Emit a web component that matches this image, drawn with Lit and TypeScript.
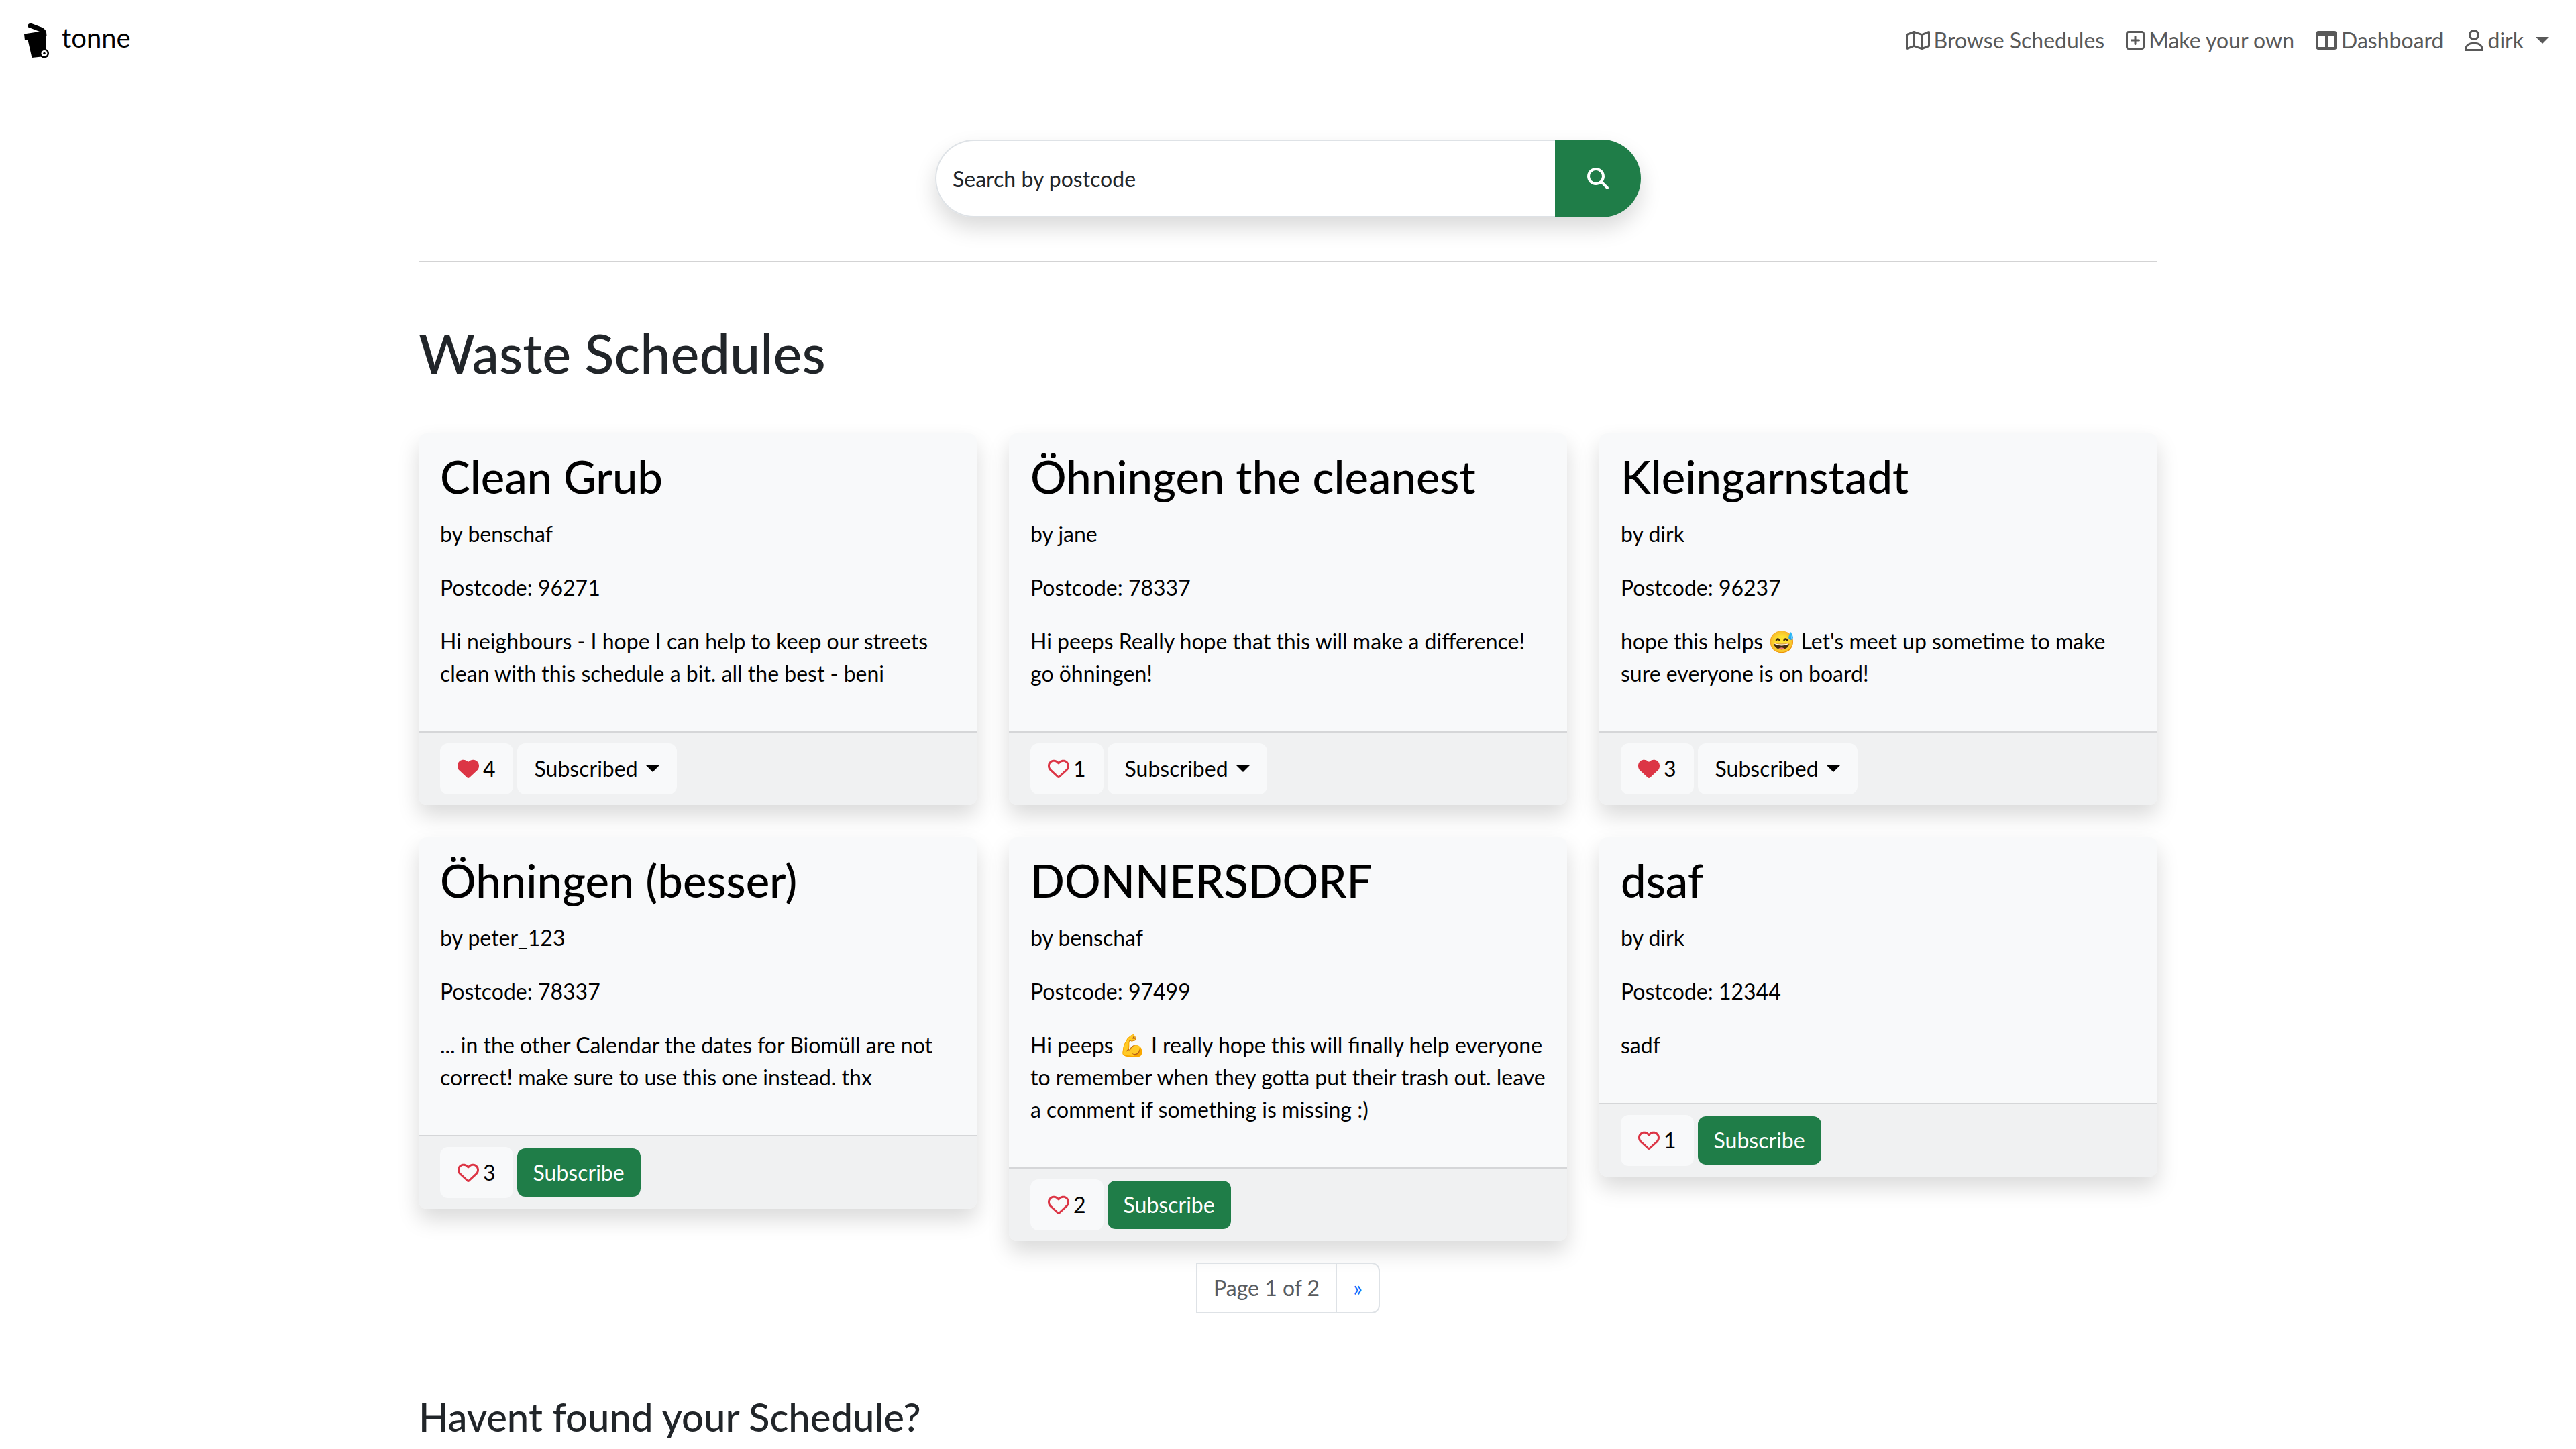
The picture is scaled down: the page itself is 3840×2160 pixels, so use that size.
import { LitElement, html, css, svg, nothing } from "lit";
import { customElement, property } from "lit/decorators.js";

interface Schedule {
  title: string;
  author: string;
  postcode: string;
  text: string;
  likes: number;
  liked: boolean;
  subscribed: boolean;
}

const SCHEDULES: Schedule[] = [
  { title: "Clean Grub", author: "benschaf", postcode: "96271", text: "Hi neighbours - I hope I can help to keep our streets clean with this schedule a bit. all the best - beni", likes: 4, liked: true, subscribed: true },
  { title: "Öhningen the cleanest", author: "jane", postcode: "78337", text: "Hi peeps Really hope that this will make a difference! go öhningen!", likes: 1, liked: false, subscribed: true },
  { title: "Kleingarnstadt", author: "dirk", postcode: "96237", text: "hope this helps 😅 Let's meet up sometime to make sure everyone is on board!", likes: 3, liked: true, subscribed: true },
  { title: "Öhningen (besser)", author: "peter_123", postcode: "78337", text: "... in the other Calendar the dates for Biomüll are not correct! make sure to use this one instead. thx", likes: 3, liked: false, subscribed: false },
  { title: "DONNERSDORF", author: "benschaf", postcode: "97499", text: "Hi peeps 💪 I really hope this will finally help everyone to remember when they gotta put their trash out. leave a comment if something is missing :)", likes: 2, liked: false, subscribed: false },
  { title: "dsaf", author: "dirk", postcode: "12344", text: "sadf", likes: 1, liked: false, subscribed: false },
];

const ICONS: Record<string, { w: number; d: string }> = {
  map: { w: 576, d: "M565.6 36.2C572.1 40.7 576 48.1 576 56V392c0 10-6.2 18.9-15.5 22.4l-168 64c-5.2 2-10.9 2.1-16.1 .3L192.5 417.5l-160 61c-7.4 2.8-15.700 1.800-22.200-2.700S0 463.900 0 456V120c0-10 6.100-18.900 15.500-22.400l168-64c5.200-2 10.900-2.100 16.100-.3L383.500 94.500l160-61c7.400-2.800 15.700-1.800 22.200 2.700zM48 136.500V421.200l120-45.700V90.800L48 136.500zM360 422.700V137.300l-144-48V374.700l144 48zm48-1.500l120-45.700V90.800L408 136.500V421.200z" },
  plus: { w: 448, d: "M64 80c-8.800 0-16 7.200-16 16V416c0 8.800 7.200 16 16 16H384c8.800 0 16-7.200 16-16V96c0-8.800-7.200-16-16-16H64zM0 96C0 60.700 28.700 32 64 32H384c35.300 0 64 28.700 64 64V416c0 35.300-28.700 64-64 64H64c-35.300 0-64-28.700-64-64V96zM200 344V280H136c-13.300 0-24-10.700-24-24s10.700-24 24-24h64V168c0-13.300 10.700-24 24-24s24 10.700 24 24v64h64c13.300 0 24 10.700 24 24s-10.700 24-24 24H248v64c0 13.300-10.700 24-24 24s-24-10.700-24-24z" },
  columns: { w: 512, d: "M0 96C0 60.700 28.700 32 64 32H448c35.300 0 64 28.700 64 64V416c0 35.300-28.700 64-64 64H64c-35.300 0-64-28.700-64-64V96zm64 64V416H224V160H64zm384 0H288V416H448V160z" },
  user: { w: 448, d: "M304 128a80 80 0 1 0-160 0 80 80 0 1 0 160 0zM96 128a128 128 0 1 1 256 0A128 128 0 1 1 96 128zM49.300 464H398.700c-8.900-63.300-63.300-112-129-112H178.300c-65.700 0-120.100 48.700-129 112zM0 482.300C0 383.800 79.800 304 178.300 304h91.400C368.200 304 448 383.800 448 482.300c0 16.400-13.300 29.700-29.700 29.700H29.700C13.300 512 0 498.700 0 482.300z" },
  search: { w: 512, d: "M416 208c0 45.900-14.900 88.300-40 122.700L502.600 457.400c12.500 12.500 12.500 32.800 0 45.300s-32.800 12.500-45.300 0L330.700 376c-34.400 25.200-76.800 40-122.700 40C93.100 416 0 322.900 0 208S93.100 0 208 0S416 93.100 416 208zM208 352a144 144 0 1 0 0-288 144 144 0 1 0 0 288z" },
  heart: { w: 512, d: "M47.600 300.400L228.300 469.100c7.500 7 17.400 10.900 27.700 10.900s20.200-3.900 27.700-10.900L464.400 300.400c30.400-28.300 47.600-68 47.600-109.500v-5.800c0-69.900-50.500-129.500-119.400-141C347 36.500 300.600 51.400 268 84L256 96 244 84c-32.600-32.600-79-47.500-124.600-39.900C50.500 55.600 0 115.200 0 185.100v5.800c0 41.500 17.200 81.200 47.600 109.500z" },
  heartOutline: { w: 512, d: "M225.800 468.200l-2.500-2.300L48.100 303.200C17.400 274.700 0 234.700 0 192.800v-3.300c0-70.400 50-130.800 119.200-144C158.600 37.900 198.900 47 231 69.600c9 6.400 17.400 13.800 25 22.300c4.200-4.800 8.700-9.200 13.500-13.300c3.700-3.200 7.500-6.200 11.500-9c0 0 0 0 0 0C313.100 47 353.400 37.900 392.800 45.400C462 58.600 512 119.100 512 189.500v3.300c0 41.900-17.400 81.900-48.100 110.400L288.700 465.900l-2.500 2.300c-8.200 7.600-19 11.900-30.200 11.900s-22-4.200-30.200-11.900zM239.100 145c-.4-.3-.7-.7-1-1.100l-17.800-20c0 0-.1-.1-.1-.1c0 0 0 0 0 0c-23.100-25.900-58-37.700-92-31.200C81.600 101.500 48 142.100 48 189.500v3.300c0 28.500 11.900 55.800 32.800 75.200L256 430.700 431.200 268c20.900-19.400 32.800-46.700 32.800-75.200v-3.300c0-47.300-33.600-88-80.100-96.900c-34-6.500-69 5.400-92 31.200c0 0 0 0-.1 .1s0 0-.1 .1l-17.800 20c-.3 .4-.7 .7-1 1.100c-4.500 4.500-10.600 7-16.900 7s-12.400-2.500-16.900-7z" },
};

const icon = (name: string) => {
  const { w, d } = ICONS[name];
  return html`<svg class="icon" width=${w / 16} height="32" viewBox="0 0 ${w} 512" aria-hidden="true">${svg`<path d=${d}></path>`}</svg>`;
};

const shared = css`
  * { box-sizing: border-box; }
  h1, h2, h3, p { margin: 0; font-weight: 500; }
  p { font-weight: 400; }
  a { text-decoration: none; color: inherit; }
  button, input { font: inherit; color: inherit; margin: 0; }
  .icon { display: block; flex: none; fill: currentColor; }
  .caret {
    width: 0;
    height: 0;
    margin-left: 12px;
    border: 10px solid transparent;
    border-top-color: currentColor;
    border-bottom: 0;
  }
`;

@customElement("schedule-card")
export class ScheduleCard extends LitElement {
  @property({ attribute: false }) schedule!: Schedule;

  static styles = [shared, css`
    :host { display: block; }
    .card {
      border-radius: 12px;
      background: #f8f9fa;
      box-shadow: 0 16px 32px rgba(0, 0, 0, 0.15);
      color: #000;
      overflow: hidden;
    }
    .body { padding: 34px 32px 30px; }
    .title { font-size: 67px; line-height: 60px; margin-bottom: 32px; }
    .line { margin-bottom: 32px; }
    .footer {
      display: flex;
      align-items: center;
      gap: 6px;
      padding: 16px 32px;
      border-top: 2px solid #d5d6d8;
      background: #f0f1f2;
    }
    .btn {
      display: flex;
      align-items: center;
      padding: 12px 24px;
      border: 2px solid #f8f9fa;
      border-radius: 12px;
      background: #f8f9fa;
      line-height: 48px;
    }
    .like { gap: 6px; }
    .heart { color: #dc3545; }
    .subscribe { border: 0; background: #1f7d48; color: #fff; }
  `];

  render() {
    const s = this.schedule;
    if (!s) return nothing;
    return html`
      <article class="card">
        <div class="body">
          <h2 class="title">${s.title}</h2>
          <p class="line">by ${s.author}</p>
          <p class="line">Postcode: ${s.postcode}</p>
          <p class="line">${s.text}</p>
        </div>
        <div class="footer">
          <button class="btn like" type="button" aria-pressed=${s.liked ? "true" : "false"}>
            <span class="heart">${icon(s.liked ? "heart" : "heartOutline")}</span>${s.likes}
          </button>
          ${s.subscribed
            ? html`<button class="btn" type="button" aria-haspopup="true">Subscribed <span class="caret"></span></button>`
            : html`<button class="btn subscribe" type="button">Subscribe</button>`}
        </div>
      </article>
    `;
  }
}

@customElement("app-root")
export class AppRoot extends LitElement {
  static styles = [shared, css`
    :host {
      display: block;
      min-height: 100vh;
      background: #fff;
      color: #212529;
      font: 400 32px/48px Lato, sans-serif;
    }
    .navbar {
      display: flex;
      align-items: center;
      justify-content: space-between;
      padding: 16px 40px 16px 32px;
    }
    .brand {
      display: flex;
      align-items: center;
      gap: 16px;
      color: #000;
      font-size: 40px;
      line-height: 60px;
    }
    .bin { display: block; }
    .nav {
      display: flex;
      gap: 32px;
      padding: 20px 0 12px;
      color: #595959;
    }
    .link { display: flex; align-items: center; gap: 6px; }
    .user { padding: 0; border: 0; background: none; }
    .container { width: min(2592px, 100% - 48px); margin: 0 auto; }
    .search {
      display: flex;
      width: min(1052px, 100%);
      margin: 96px auto 65px;
      border-radius: 58px;
      box-shadow: 0 16px 32px rgba(0, 0, 0, 0.15);
    }
    .field {
      flex: 1;
      min-width: 0;
      height: 116px;
      padding: 0 24px;
      border: 2px solid #dee2e6;
      border-right: 0;
      border-radius: 58px 0 0 58px;
      background: #fff;
    }
    .field::placeholder { color: #212529; opacity: 1; }
    .go {
      display: flex;
      align-items: center;
      justify-content: center;
      width: 128px;
      padding: 0;
      border: 0;
      border-radius: 0 58px 58px 0;
      background: #1f7d48;
      color: #fff;
    }
    .rule { height: 2px; margin: 0; border: 0; background: #d3d3d4; }
    .heading { margin: 95px 0 80px; font-size: 81px; line-height: 80px; }
    .grid {
      display: grid;
      grid-template-columns: repeat(3, minmax(0, 1fr));
      align-items: start;
      gap: 48px;
    }
    .pages { display: flex; justify-content: center; margin: 32px 0 126px; }
    .page {
      padding: 12px 24px;
      border: 2px solid #dee2e6;
      color: #595c5f;
    }
    .next {
      margin-left: -2px;
      border-radius: 0 12px 12px 0;
      color: #0d6efd;
    }
    .subheading { font-size: 58px; line-height: 56px; padding-bottom: 16px; }
  `];

  render() {
    return html`
      <nav class="navbar">
        <a class="brand" href="#">
          <svg class="bin" width="44" height="64" viewBox="0 -2 44 64" aria-hidden="true">
            <path d="M11 9.500Q13 8.500 15 9L31 15Q36 18 37 22L37.500 27H36.500V50L30 58.500L15.500 60L9.500 33.500L5 34L4 24.500L27 21L10 14.500Q8.500 11.500 11 9.500Z"></path>
            <circle cx="34" cy="53.500" r="7"></circle>
            <circle cx="34" cy="53.500" r="4.500" fill="#fff"></circle>
            <circle cx="34" cy="53.500" r="1.800"></circle>
          </svg>
          tonne
        </a>
        <div class="nav">
          <a class="link" href="#">${icon("map")}Browse Schedules</a>
          <a class="link" href="#">${icon("plus")}Make your own</a>
          <a class="link" href="#">${icon("columns")}Dashboard</a>
          <button class="link user" type="button" aria-haspopup="true">${icon("user")}dirk <span class="caret"></span></button>
        </div>
      </nav>
      <main class="container">
        <form class="search" role="search">
          <input class="field" type="text" placeholder="Search by postcode" aria-label="Search by postcode" />
          <button class="go" type="button" aria-label="Search">${icon("search")}</button>
        </form>
        <hr class="rule" />
        <h1 class="heading">Waste Schedules</h1>
        <section class="grid">
          ${SCHEDULES.map((s) => html`<schedule-card .schedule=${s}></schedule-card>`)}
        </section>
        <div class="pages">
          <span class="page">Page 1 of 2</span>
          <a class="page next" href="#" aria-label="Next page">»</a>
        </div>
        <h3 class="subheading">Havent found your Schedule?</h3>
      </main>
    `;
  }
}
